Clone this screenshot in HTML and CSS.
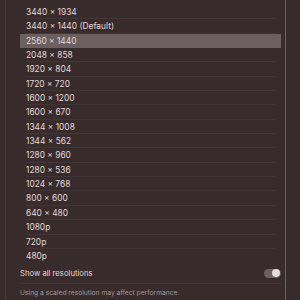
FILE: index.html
```html
<!DOCTYPE html>
<html lang="en">
<head>
    <meta charset="UTF-8">
    <title>Resolutions</title>
    <link rel="stylesheet" href="styles.css">
</head>
<body>
    <div class="pane">
        <ul class="list">
            <li>3440 × 1934</li>
            <li>3440 × 1440 (Default)</li>
            <li class="active">2560 × 1440</li>
            <li>2048 × 858</li>
            <li>1920 × 804</li>
            <li>1720 × 720</li>
            <li>1600 × 1200</li>
            <li>1600 × 670</li>
            <li>1344 × 1008</li>
            <li>1344 × 562</li>
            <li>1280 × 960</li>
            <li>1280 × 536</li>
            <li>1024 × 768</li>
            <li>800 × 600</li>
            <li>640 × 480</li>
            <li>1080p</li>
            <li>720p</li>
            <li class="last">480p</li>
        </ul>
        <div class="showall">
            <span>Show all resolutions</span>
            <span class="toggle"><span class="knob"></span></span>
        </div>
        <p class="note">Using a scaled resolution may affect performance.</p>
    </div>
</body>
</html>
```

FILE: styles.css
```css
body
{
    margin: 0;
    width: 300px;
    height: 300px;
    overflow: hidden;
    background-color: #382b2c;
    font-family: "Inter", "Liberation Sans", sans-serif;
    color: #e0d8d8;
}
.pane
{
    margin-left: 5px;
    width: 281px;
    height: 300px;
    border-left: 1px solid #4a3c3d;
    border-right: 1px solid #6e6061;
    padding: 5px 4px 0 14px;
    box-sizing: border-box;
}
.list
{
    list-style: none;
    margin: 0;
    padding: 0;
}
.list li
{
    height: 14.35px;
    line-height: 14.35px;
    padding-left: 6px;
    font-size: 8.4px;
    background: linear-gradient(#433536, #433536) no-repeat left 6px bottom / calc(100% - 11px) 1px;
}
.list li.active
{
    background: #6b5f5f;
}
.list li.last
{
    background: none;
}
.showall
{
    display: flex;
    justify-content: space-between;
    align-items: center;
    height: 16px;
    margin-top: 2px;
    font-size: 7.7px;
    border-bottom: 1px solid #433536;
    padding-bottom: 2px;
}
.toggle
{
    display: flex;
    justify-content: flex-end;
    align-items: center;
    width: 17px;
    height: 9px;
    border-radius: 5px;
    background: #6a6061;
}
.knob
{
    width: 8px;
    height: 8px;
    margin-right: 1px;
    border-radius: 50%;
    background: #e2dcdc;
}
.note
{
    margin: 5px 0 0 0;
    font-size: 6.7px;
    color: #a39898;
}
```
